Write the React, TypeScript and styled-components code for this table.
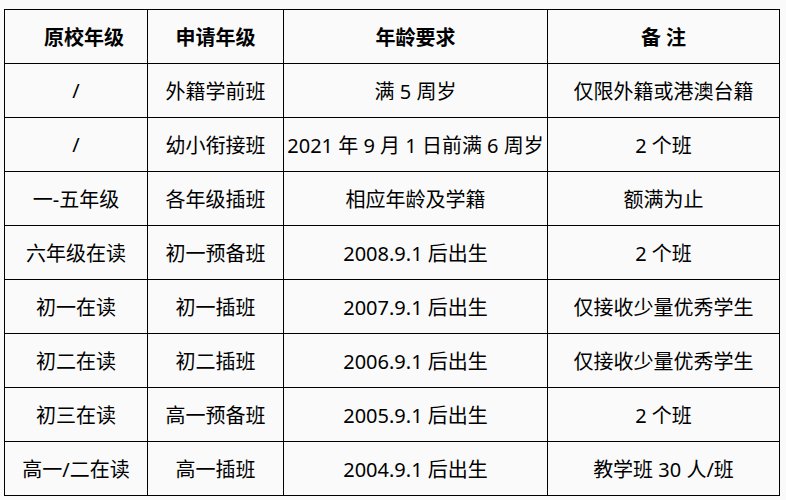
import * as React from "react";
import styled, { createGlobalStyle } from "styled-components";

const GlobalStyle = createGlobalStyle`
  html, body {
    margin: 0;
    padding: 0;
    background: #fafafa;
  }
`;

const Page = styled.div`
  padding: 9px 0 0 4px;
  font-family: "Noto Sans", "Noto Sans CJK SC", sans-serif;
  color: #000;
`;

const Table = styled.table`
  border-collapse: collapse;
  table-layout: fixed;
  width: 775px;
`;

const Col = styled.col<{ $w: number }>`
  width: ${(p) => p.$w}px;
`;

const Row = styled.tr`
  height: 54px;
`;

const HeadCell = styled.th<{ $indent?: number }>`
  border: 1px solid #000;
  padding: 0 0 0 ${(p) => p.$indent || 0}px;
  font-size: 20px;
  font-weight: 700;
  text-align: center;
  vertical-align: middle;
  white-space: nowrap;
`;

const Cell = styled.td`
  border: 1px solid #000;
  padding: 0;
  font-size: 20px;
  font-weight: 400;
  text-align: center;
  vertical-align: middle;
  white-space: nowrap;
`;

const headers = ["原校年级", "申请年级", "年龄要求", "备 注"];

const rows: string[][] = [
  ["/", "外籍学前班", "满 5 周岁", "仅限外籍或港澳台籍"],
  ["/", "幼小衔接班", "2021 年 9 月 1 日前满 6 周岁", "2 个班"],
  ["一-五年级", "各年级插班", "相应年龄及学籍", "额满为止"],
  ["六年级在读", "初一预备班", "2008.9.1 后出生", "2 个班"],
  ["初一在读", "初一插班", "2007.9.1 后出生", "仅接收少量优秀学生"],
  ["初二在读", "初二插班", "2006.9.1 后出生", "仅接收少量优秀学生"],
  ["初三在读", "高一预备班", "2005.9.1 后出生", "2 个班"],
  ["高一/二在读", "高一插班", "2004.9.1 后出生", "教学班 30 人/班"],
];

export default function App() {
  return (
    <Page>
      <GlobalStyle />
      <Table>
        <colgroup>
          <Col $w={143} />
          <Col $w={136} />
          <Col $w={264} />
          <Col $w={232} />
        </colgroup>
        <thead>
          <Row>
            {headers.map((h, i) => (
              <HeadCell key={h} $indent={i === 0 ? 16 : 0}>
                {h}
              </HeadCell>
            ))}
          </Row>
        </thead>
        <tbody>
          {rows.map((r, i) => (
            <Row key={"row-" + i}>
              {r.map((c, j) => (
                <Cell key={"cell-" + i + "-" + j}>{c}</Cell>
              ))}
            </Row>
          ))}
        </tbody>
      </Table>
    </Page>
  );
}
